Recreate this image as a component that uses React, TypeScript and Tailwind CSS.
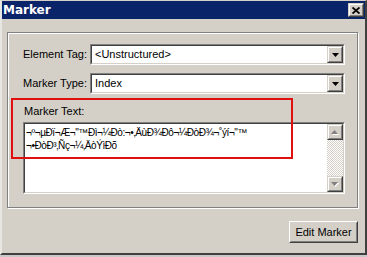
import React from "react";

// classic win2k 3D borders
function Sunken({ className = "", children }: { className?: string; children?: React.ReactNode }) {
  return (
    <div className={`border border-t-[#808080] border-l-[#808080] border-b-white border-r-white ${className}`}>
      <div className="w-full h-full border border-t-[#404040] border-l-[#404040] border-b-[#d4d0c8] border-r-[#d4d0c8] bg-white flex">
        {children}
      </div>
    </div>
  );
}

function Raised({ className = "", children }: { className?: string; children?: React.ReactNode }) {
  return (
    <div className={`border border-t-[#d4d0c8] border-l-[#d4d0c8] border-b-[#404040] border-r-[#404040] ${className}`}>
      <div className="w-full h-full border border-t-white border-l-white border-b-[#808080] border-r-[#808080] bg-[#d4d0c8] flex items-center justify-center">
        {children}
      </div>
    </div>
  );
}

function DownArrow({ disabled = false }: { disabled?: boolean }) {
  if (disabled) {
    return (
      <svg width="8" height="5" viewBox="0 0 8 5">
        <path d="M1 1h7l-3.5 4z" fill="#fff" />
        <path d="M0 0h7l-3.5 4z" fill="#808080" />
      </svg>
    );
  }
  return (
    <svg width="7" height="4" viewBox="0 0 7 4">
      <path d="M0 0h7l-3.5 4z" fill="#000" />
    </svg>
  );
}

function UpArrow() {
  return (
    <svg width="8" height="5" viewBox="0 0 8 5">
      <path d="M1 5h7l-3.5-4z" fill="#fff" />
      <path d="M0 4h7l-3.5-4z" fill="#808080" />
    </svg>
  );
}

function Combo({ value }: { value: string }) {
  return (
    <Sunken className="w-[255px] h-[21px]">
      <span className="flex-1 pl-[3px] leading-[17px]">{value}</span>
      <Raised className="w-[16px] h-[17px]">
        <DownArrow />
      </Raised>
    </Sunken>
  );
}

export default function App() {
  return (
    <div
      className="relative w-[367px] h-[257px] bg-[#d4d0c8] overflow-hidden text-[11px] text-black flex flex-col"
      style={{ fontFamily: '"Liberation Sans", Arial, sans-serif' }}
    >
      {/* window frame */}
      <div className="flex-1 flex flex-col border-t border-l-2 border-t-[#d4d0c8] border-l-[#e8e6e0] border-r-2 border-r-[#404040] border-b-2 border-b-[#404040]">
        {/* title bar */}
        <div className="h-[18px] bg-[#0a246a] flex items-center justify-between pl-[1px] pr-[1px]">
          <span
            className="text-white font-bold text-[12px] leading-none"
            style={{ fontFamily: '"DejaVu Sans", Tahoma, sans-serif' }}
          >
            Marker
          </span>
          <Raised className="w-[16px] h-[14px]">
            <svg width="8" height="7" viewBox="0 0 8 7">
              <path d="M0.5 0.5l7 6M7.5 0.5l-7 6" stroke="#000" strokeWidth="1.8" />
            </svg>
          </Raised>
        </div>

        {/* group box */}
        <div className="ml-[5px] mt-[13px] w-[351px] h-[176px] border border-[#808080] shadow-[1px_1px_0_#fff,inset_1px_1px_0_#fff] pl-[15px] pt-[11px] flex flex-col">
          <div className="flex items-center h-[21px]">
            <span className="w-[67px]">Element Tag:</span>
            <Combo value="<Unstructured>" />
          </div>
          <div className="flex items-center h-[21px] mt-[8px]">
            <span className="w-[67px]">Marker Type:</span>
            <Combo value="Index" />
          </div>
          <div className="mt-[11px] h-[13px] leading-[13px] pl-[1px]">Marker Text:</div>
          <Sunken className="mt-[4px] w-[322px] h-[72px]">
            <div className="flex-1 px-[1px] pt-[2px] text-[10px] leading-[13px] tracking-[-0.4px] break-all">
              ¬º¬µÐï¬Æ¬"™Ðì¬¼Ðò:¬•‚ÄùÐ¾Ðô¬¼ÐòÐ¾¬˚ýí¬"™
              <br />
              ¬•ÐòÐ³‚Ñç¬¼‚ÄòÝìÐõ
            </div>
            <div className="w-[16px] flex flex-col bg-[repeating-conic-gradient(#d4d0c8_0_25%,#fff_0_50%)] bg-[length:2px_2px]">
              <Raised className="w-[16px] h-[16px]">
                <UpArrow />
              </Raised>
              <div className="flex-1" />
              <Raised className="w-[16px] h-[16px]">
                <DownArrow disabled />
              </Raised>
            </div>
          </Sunken>
        </div>

        {/* bottom button */}
        <div className="flex justify-end mt-[13px] mr-[7px]">
          <div className="w-[69px] h-[22px] border border-t-white border-l-white border-b-[#404040] border-r-[#404040]">
            <div className="w-full h-full border border-t-[#d4d0c8] border-l-[#d4d0c8] border-b-[#808080] border-r-[#808080] flex items-center justify-center">
              Edit Marker
            </div>
          </div>
        </div>
      </div>
      <div className="h-[2px] bg-[#c8c8c8]" />

      {/* highlight annotation */}
      <div className="absolute left-[11px] top-[98px] w-[282px] h-[61px] border-2 border-[#e01010] pointer-events-none" />
    </div>
  );
}
